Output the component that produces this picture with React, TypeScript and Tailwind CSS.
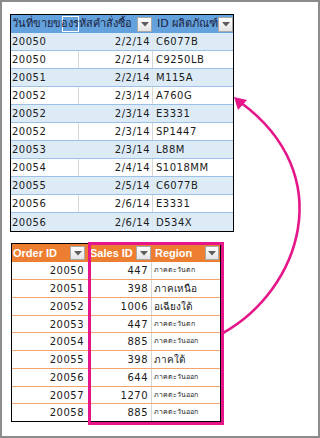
import React from "react";

const dataFont = { fontFamily: '"DejaVu Sans", "Noto Sans", sans-serif' };
const headFont = { fontFamily: '"Liberation Sans", Arial, sans-serif' };

const topRows: [string, string, string][] = [
  ["20050", "2/2/14", "C6077B"],
  ["20050", "2/2/14", "C9250LB"],
  ["20051", "2/2/14", "M115A"],
  ["20052", "2/3/14", "A760G"],
  ["20052", "2/3/14", "E3331"],
  ["20052", "2/3/14", "SP1447"],
  ["20053", "2/3/14", "L88M"],
  ["20054", "2/4/14", "S1018MM"],
  ["20055", "2/5/14", "C6077B"],
  ["20056", "2/6/14", "E3331"],
  ["20056", "2/6/14", "D534X"],
];

const bottomRows: [string, string, string, boolean, number][] = [
  ["20050", "447", "ภาคตะวันตก", true, 18],
  ["20051", "398", "ภาคเหนือ", false, 18],
  ["20052", "1006", "อเฉียงใต้", false, 18],
  ["20053", "447", "ภาคตะวันตก", true, 17],
  ["20054", "885", "ภาคตะวันออก", true, 18],
  ["20055", "398", "ภาคใต้", false, 18],
  ["20056", "644", "ภาคตะวันออก", true, 18],
  ["20057", "1270", "ภาคตะวันออก", true, 17],
  ["20058", "885", "ภาคตะวันออก", true, 17],
];

function Drop({ w = 15, h = 15 }: { w?: number; h?: number }) {
  return (
    <div
      className="flex items-center justify-center border border-[#a8a8a8] bg-gradient-to-b from-white to-[#e4e4e4] shrink-0"
      style={{ width: w, height: h }}
    >
      <svg width="8" height="5" viewBox="0 0 8 5">
        <polygon points="0,0 8,0 4,4.5" fill="#5c5c5c" />
      </svg>
    </div>
  );
}

export default function App() {
  return (
    <div className="relative w-[320px] h-[438px] border-2 border-[#8c8c8c] bg-white overflow-hidden">
      {/* Top table */}
      <div className="mt-[12px] ml-[8px] w-[224px] border border-black text-[10px] tracking-[0.5px] text-[#1b1b1b]" style={dataFont}>
        <div className="relative flex h-[18px] bg-[#64a2dd] items-center">
          <div className="w-[68px] h-full relative">
            <div className="absolute left-[51px] top-[1px] w-[17px] h-[16px] border border-white" />
          </div>
          <div className="w-[74px] h-full flex items-center justify-end pr-[1px]">
            <Drop w={15} h={15} />
          </div>
          <div className="w-[80px] h-full flex items-center justify-between pl-[4px] pr-[1px]">
            <span className="text-[11px] tracking-normal text-[#1b2340] whitespace-nowrap">ID ผลิตภัณฑ์</span>
            <Drop w={15} h={15} />
          </div>
          <span className="absolute left-[1px] top-[2px] text-[11px] tracking-normal text-[#1b2340] whitespace-nowrap leading-[14px]">
            วันที่ขายของรหัสคำสั่งซื้อ
          </span>
        </div>
        {topRows.map((r, i) => {
          const blue = i % 2 === 0;
          return (
            <div
              key={i}
              className={`flex h-[18px] ${i < topRows.length - 1 ? "border-b border-[#9bc2e6]" : ""} ${blue ? "bg-[#ddebf7]" : "bg-white"}`}
            >
              <div className={`w-[68px] flex items-center pl-[1px] ${blue ? "" : "border-r border-[#d6d6d6]"}`}>{r[0]}</div>
              <div className={`w-[74px] flex items-center justify-end pr-[2px] ${blue ? "border-r border-[#dde6ee]" : "border-r border-[#d6d6d6]"}`}>{r[1]}</div>
              <div className="w-[80px] flex items-center pl-[3px]">{r[2]}</div>
            </div>
          );
        })}
      </div>

      {/* Bottom table */}
      <div className="relative mt-[11px] ml-[9px] w-[210px] border border-black text-[10px] tracking-[0.5px] text-[#1b1b1b]" style={dataFont}>
        <div className="flex h-[18px] bg-[#ed7d31] items-center">
          <div className="w-[74px] h-full flex items-center justify-between pl-[1px] pr-[1px]">
            <span className="text-[11px] font-bold tracking-normal text-white whitespace-nowrap" style={headFont}>Order ID</span>
            <Drop w={15} h={14} />
          </div>
          <div className="w-[66px] h-full flex items-center justify-between pl-[4px] pr-[1px]">
            <span className="text-[11px] font-bold tracking-normal text-white whitespace-nowrap" style={headFont}>Sales ID</span>
            <Drop w={15} h={14} />
          </div>
          <div className="w-[68px] h-full flex items-center justify-between pl-[3px] pr-[1px]">
            <span className="text-[11px] font-bold tracking-normal text-white whitespace-nowrap" style={headFont}>Region</span>
            <Drop w={14} h={14} />
          </div>
        </div>
        {bottomRows.map((r, i) => (
          <div
            key={i}
            className={`flex ${i < bottomRows.length - 1 ? "border-b border-[#f2a36f]" : ""} bg-white`}
            style={{ height: r[4] }}
          >
            <div className="w-[74px] flex items-center justify-end pr-[2px]">{r[0]}</div>
            <div className="w-[66px] flex items-center justify-end pr-[3px] border-r border-[#d6d6d6]">{r[1]}</div>
            <div className={`w-[68px] flex items-center pl-[2px] tracking-normal whitespace-nowrap overflow-hidden ${r[3] ? "text-[7px]" : "text-[10px]"}`}>
              {r[2]}
            </div>
          </div>
        ))}
        <div className="absolute left-[76px] top-[-2px] w-[136px] h-[183px] border-[3px] border-[#e5168a]" />
      </div>

      {/* Arrow */}
      <svg className="absolute left-[-2px] top-[-2px] pointer-events-none" width="320" height="438" viewBox="0 0 320 438">
        <path d="M223 333 C 300 290 340 175 240 102" fill="none" stroke="#e5168a" strokeWidth="2.6" />
        <polygon points="234,97 247,100 238,110" fill="#e5168a" />
      </svg>
    </div>
  );
}
